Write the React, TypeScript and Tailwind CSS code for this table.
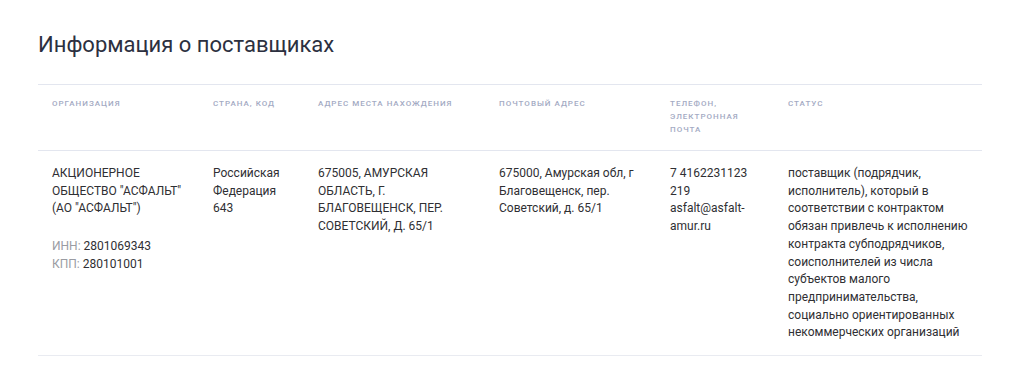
import React from "react";

const headers = [
  { t: "Организация", w: "w-[161px]" },
  { t: "Страна, код", w: "w-[105px]" },
  { t: "Адрес места нахождения", w: "w-[181px]" },
  { t: "Почтовый адрес", w: "w-[171px]" },
  { t: "Телефон, электронная почта", w: "w-[118px]" },
  { t: "Статус", w: "w-[208px]" },
];

export default function App() {
  return (
    <div
      className="min-h-[378px] bg-white pl-[38px] pr-[30px] pt-[30px]"
      style={{ fontFamily: "Roboto, 'Liberation Sans', sans-serif" }}
    >
      <h1 className="text-[22px] leading-[30px] text-[#2c3040] font-normal">Информация о поставщиках</h1>
      <table className="mt-[24px] w-[944px] table-fixed border-collapse">
        <thead>
          <tr className="border-t border-b border-[#e3e6ef]">
            {headers.map((h) => (
              <th
                key={h.t}
                className={`${h.w} px-[14px] pt-[12px] pb-[14px] text-left align-top text-[8px] leading-[13px] font-medium uppercase tracking-[1px] text-[#a3aac3]`}
              >
                {h.t}
              </th>
            ))}
          </tr>
        </thead>
        <tbody>
          <tr className="border-b border-[#e9ebf1] text-[12px] leading-[17.7px] text-[#2f2f33] align-top">
            <td className="px-[14px] pt-[14px] pb-[13px]">
              <div>АКЦИОНЕРНОЕ ОБЩЕСТВО "АСФАЛЬТ" (АО "АСФАЛЬТ")</div>
              <div className="mt-[20px]">
                <span className="text-[#9a9ca3]">ИНН: </span>2801069343
              </div>
              <div>
                <span className="text-[#9a9ca3]">КПП: </span>280101001
              </div>
            </td>
            <td className="px-[14px] pt-[14px] pb-[13px]">
              <div>Российская Федерация</div>
              <div>643</div>
            </td>
            <td className="px-[14px] pt-[14px] pb-[13px]">675005, АМУРСКАЯ ОБЛАСТЬ, Г. БЛАГОВЕЩЕНСК, ПЕР. СОВЕТСКИЙ, Д. 65/1</td>
            <td className="px-[14px] pt-[14px] pb-[13px]">675000, Амурская обл, г Благовещенск, пер. Советский, д. 65/1</td>
            <td className="px-[14px] pt-[14px] pb-[13px] break-words">
              <div>7 4162231123 219</div>
              <div>
                asfalt@asfalt-
                <br />
                amur.ru
              </div>
            </td>
            <td className="px-[14px] pt-[14px] pb-[13px]">
              поставщик (подрядчик, исполнитель), который в соответствии с контрактом обязан привлечь к исполнению контракта субподрядчиков, соисполнителей из числа субъектов малого предпринимательства, социально ориентированных некоммерческих организаций
            </td>
          </tr>
        </tbody>
      </table>
    </div>
  );
}
